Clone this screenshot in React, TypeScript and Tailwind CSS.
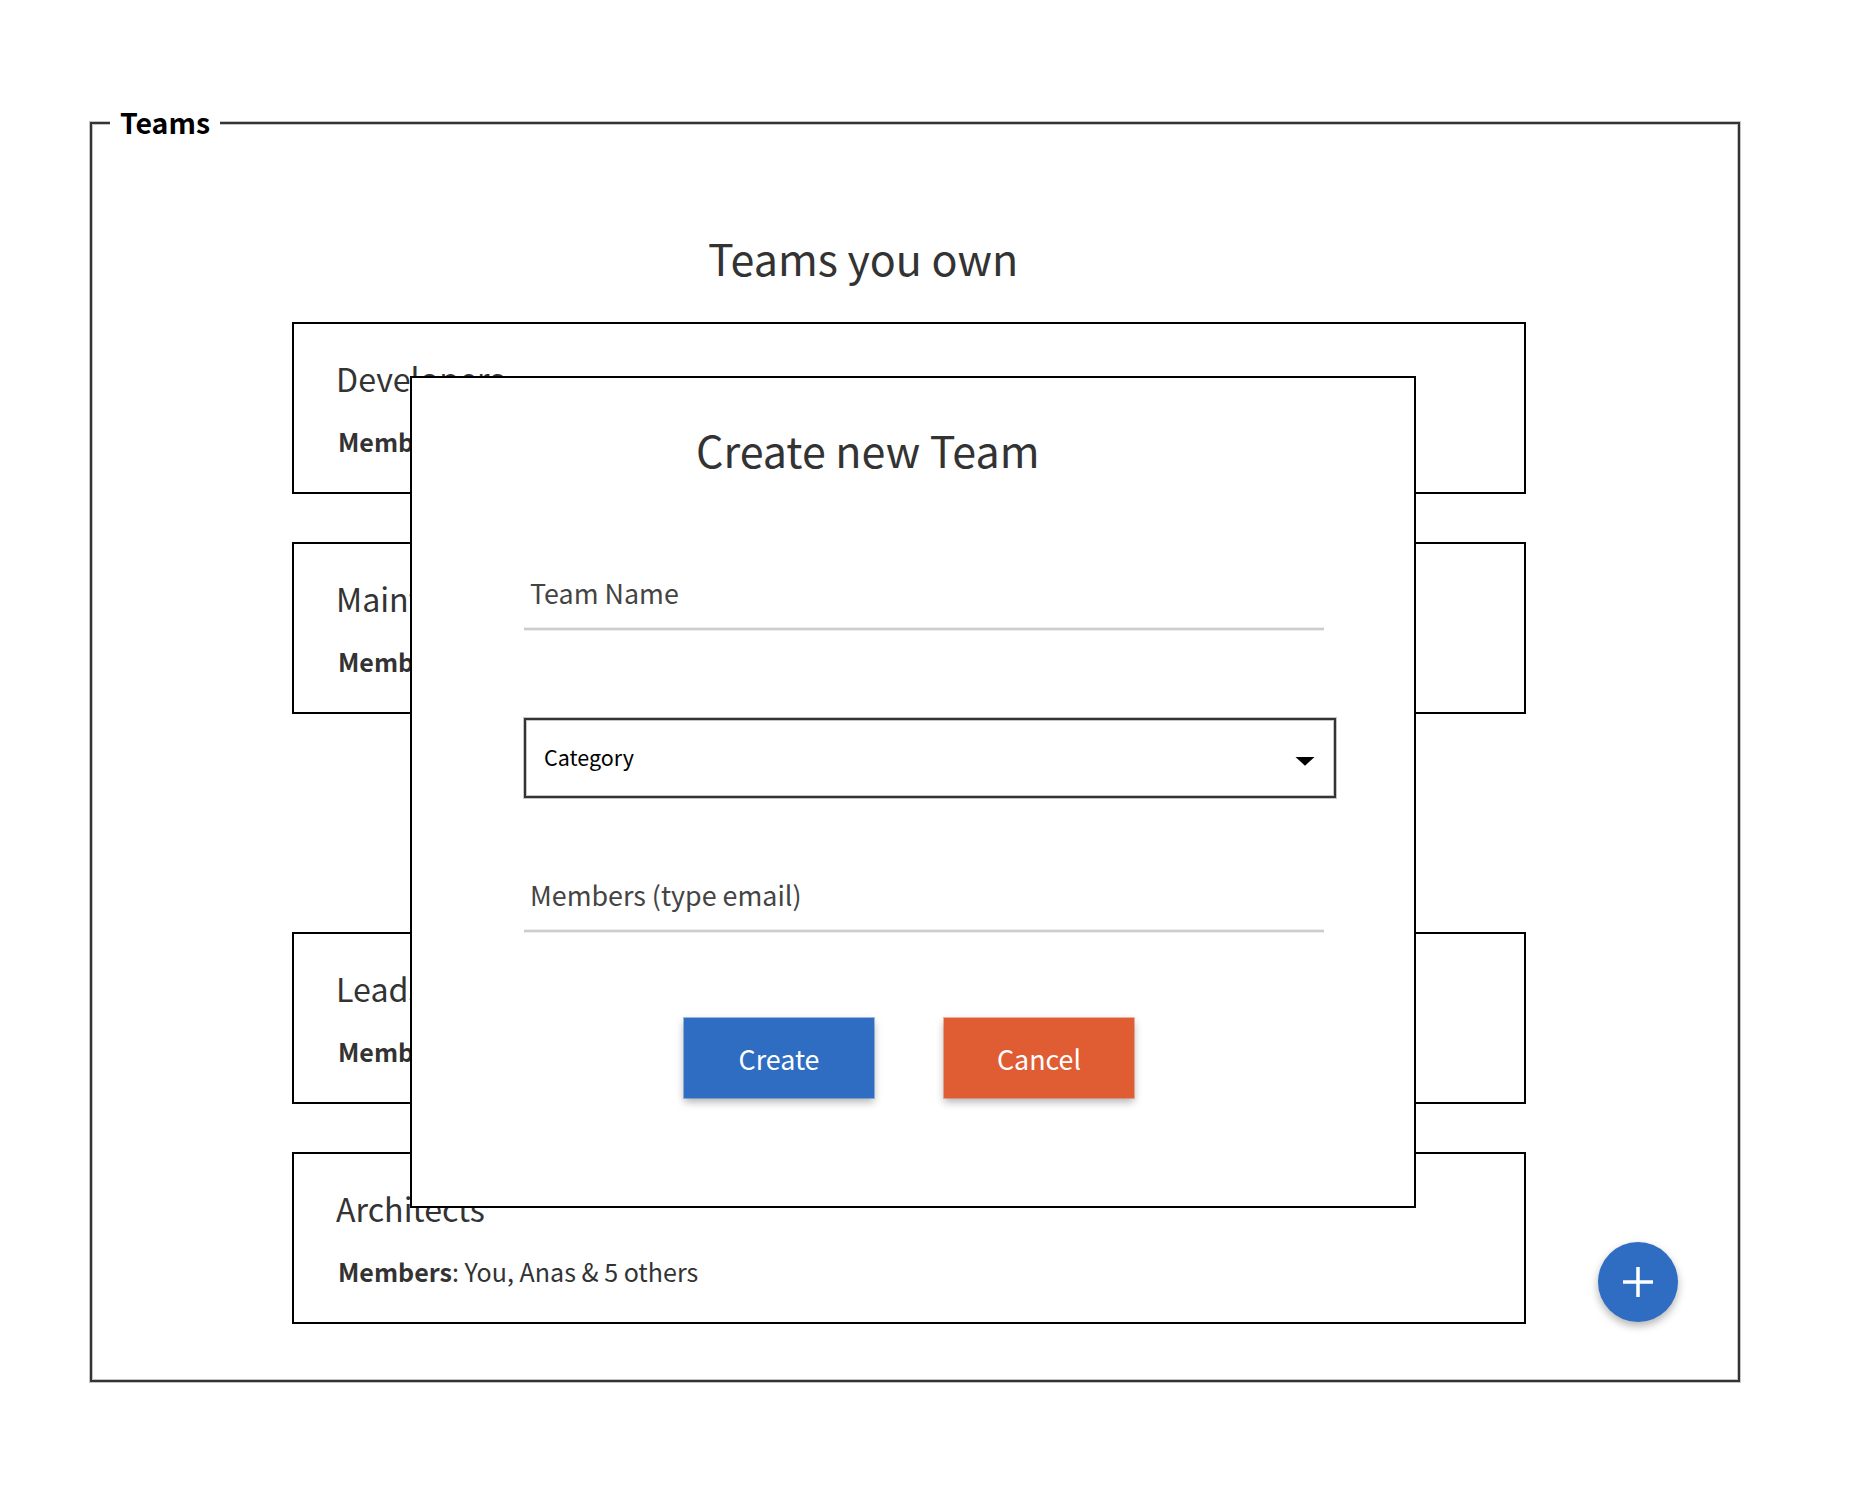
import type { ReactNode } from "react";

function TeamCard({ name, members }: { name: string; members: string }) {
  return (
    <section className="h-[172px] w-[1234px] border-2 border-black bg-white pt-[32px] pl-[42px] text-[#333]">
      <h2 className="text-[32.2px] leading-[44px] whitespace-nowrap">{name}</h2>
      <p className="mt-[23px] ml-[2px] text-[25.05px] leading-[36px] whitespace-nowrap">
        <b className="font-bold">Members</b>: {members}
      </p>
    </section>
  );
}

function Field({ label }: { label: string }) {
  return (
    <div className="flex h-[67px] w-[800px] flex-col">
      <span className="h-[63px] shrink-0 pl-[6px] text-[26.85px] leading-[57px] text-[#444]">{label}</span>
      <span className="h-[4px] w-full shrink-0 border-y border-[#eee] bg-[#ccc]" />
    </div>
  );
}

function Button({ className, children }: { className: string; children: ReactNode }) {
  return (
    <button className={"h-[80px] w-[190px] pt-px text-[26.85px] leading-[78px] text-white " + className}>
      {children}
    </button>
  );
}

export default function App() {
  return (
    <main
      className="relative h-[1498px] w-[1864px] overflow-hidden bg-white pt-[122px] pl-[90px]"
      style={{ fontFamily: '"Noto Sans CJK SC", sans-serif' }}
    >
      <div className="h-[1260px] w-[1650px] border-2 border-[#333] pl-[200px] shadow-[0_0_0_1px_#c4c4c4,inset_0_0_0_1px_#c4c4c4]">
        <div className="relative -mt-[22px] -ml-[182px] h-[40px] w-[110px] bg-white pl-[10px] text-[28.5px] leading-[40px] font-bold text-black">
          Teams
        </div>
        <h1 className="mt-[84px] ml-[416px] h-[114px] text-[43px] leading-[62px] text-[#333]">
          Teams you own
        </h1>
        <div className="-mt-[18px] flex flex-col gap-12">
          <TeamCard name="Developers" members="You, Anas & 5 others" />
          <TeamCard name="Maintainers" members="You, Anas & 5 others" />
          <div className="h-[122px]" />
          <TeamCard name="Leads" members="You, Anas & 5 others" />
          <TeamCard name="Architects" members="You, Anas & 5 others" />
        </div>
      </div>

      <div
        role="dialog"
        className="absolute top-[376px] left-[410px] h-[832px] w-[1006px] border-2 border-black bg-white pl-[112px]"
      >
        <h1 className="mt-[40px] ml-[172px] h-[146px] text-[43px] leading-[62px] text-[#333]">
          Create new Team
        </h1>
        <Field label="Team Name" />
        <div className="mt-[87px] flex h-[80px] w-[812px] items-center justify-between border-2 border-[#333] pr-[19px] pl-[18px] shadow-[0_0_0_1px_#c4c4c4,inset_0_0_0_1px_#c4c4c4]">
          <span className="mb-[2px] text-[21.5px] leading-[30px] text-black">Category</span>
          <svg className="mt-[7px]" width="20" height="9" viewBox="0 0 20 9">
            <path d="M0.5 0H19.5L10 8.7Z" fill="#000" />
          </svg>
        </div>
        <div className="mt-[68px]">
          <Field label="Members (type email)" />
        </div>
        <div className="mt-[85px] ml-[160px] flex gap-[70px]">
          <Button className="bg-[#2e6dc2] shadow-[0_0_0_1px_rgba(46,109,194,0.45),0_4px_8px_rgba(0,0,0,0.3)]">
            Create
          </Button>
          <Button className="bg-[#e05c33] shadow-[0_0_0_1px_rgba(224,92,51,0.45),0_4px_8px_rgba(0,0,0,0.3)]">
            Cancel
          </Button>
        </div>
      </div>

      <button className="absolute top-[1242px] left-[1598px] flex h-[80px] w-[80px] items-center justify-center rounded-full bg-[#2e6dc2] shadow-[0_4px_8px_rgba(0,0,0,0.3)]">
        <svg width="30" height="30" viewBox="0 0 30 30">
          <path d="M15 0V30M0 15H30" stroke="#fff" strokeWidth="3.5" />
        </svg>
      </button>
    </main>
  );
}
